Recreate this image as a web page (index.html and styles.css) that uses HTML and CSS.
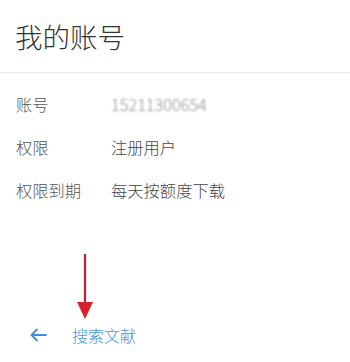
FILE: index.html
```html
<!DOCTYPE html>
<html lang="zh">
<head>
<meta charset="utf-8">
<link rel="stylesheet" href="styles.css">
</head>
<body>
<div class="page">
  <header class="header"><h1 class="title">我的账号</h1></header>
  <section class="info">
    <div class="row"><span class="label">账号</span><span class="value blurred">15211300654</span></div>
    <div class="row"><span class="label">权限</span><span class="value">注册用户</span></div>
    <div class="row"><span class="label">权限到期</span><span class="value">每天按额度下载</span></div>
  </section>
  <footer class="footer">
    <svg class="back" width="18" height="14" viewBox="0 0 18 14"><path d="M17 7H2.5M8 1.5L2.5 7L8 12.5" fill="none" stroke="#3d8fd8" stroke-width="1.8" stroke-linecap="round" stroke-linejoin="round"/></svg>
    <span class="link">搜索文献</span>
  </footer>
  <svg class="annot" width="20" height="68" viewBox="0 0 20 68"><line x1="9" y1="1" x2="9" y2="52" stroke="#c8202c" stroke-width="2.2"/><path d="M1 49L17 49L9 66Z" fill="#d8202a"/></svg>
</div>
</body>
</html>
```
FILE: styles.css
```css
html, body { margin: 0; padding: 0; background: #fff; }
body { font-family: "Noto Sans CJK SC", "Noto Sans", sans-serif; }
.page { position: relative; display: flex; flex-direction: column; min-height: 362px; }
.header { height: 72px; border-bottom: 1px solid #e9e9e9; display: flex; align-items: center; padding-left: 15px; }
.title { margin: 0; font-size: 27.5px; font-weight: 300; color: #333; line-height: 36px; }
.info { padding-top: 10px; }
.row { display: flex; height: 43px; line-height: 43px; font-size: 16.3px; font-weight: 300; padding-left: 16px; }
.label { width: 95px; color: #555; }
.value { color: #444; }
.blurred { filter: blur(1.3px); color: #8a8a8a; }
.footer { margin-top: auto; height: 54px; display: flex; align-items: center; padding-left: 29px; }
.back { margin-right: 25px; }
.link { font-size: 16px; font-weight: 300; color: #4a93d6; }
.annot { position: absolute; left: 76px; top: 253px; }
```
